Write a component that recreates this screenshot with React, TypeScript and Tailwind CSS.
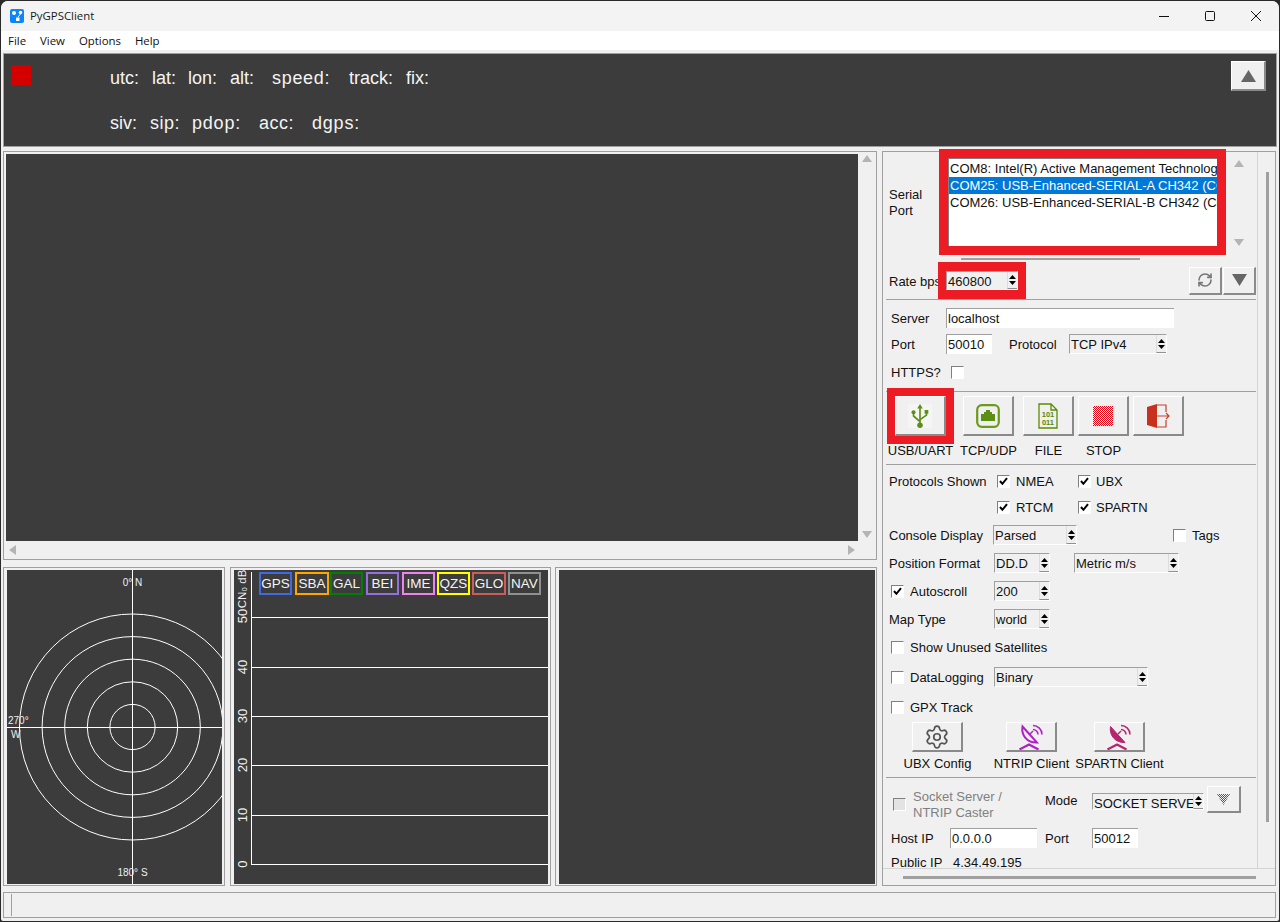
import clsx from "clsx";
import { RefreshCw, Settings } from "lucide-react";
import type { ReactNode } from "react";

const RED = "border-[#ed1c24]";

function Tri({ dir = "down", className = "" }: { dir?: "up" | "down"; className?: string }) {
  return (
    <svg width="15" height="12" viewBox="0 0 15 12" className={className}>
      <polygon points={dir === "up" ? "7.5,0 15,12 0,12" : "0,0 15,0 7.5,12"} fill="currentColor" />
    </svg>
  );
}

function Check({ checked, disabled }: { checked?: boolean; disabled?: boolean }) {
  return (
    <div
      className={clsx(
        "flex h-[13px] w-[13px] flex-none items-center justify-center border border-t-[#808080] border-r-white border-b-white border-l-[#808080]",
        disabled ? "bg-[#e3e3e3]" : "bg-white",
      )}
    >
      {checked && (
        <svg width="9" height="9" viewBox="0 0 9 9">
          <path d="M1 4 L3.4 6.8 L8 1.2" fill="none" stroke="#000" strokeWidth="2" />
        </svg>
      )}
    </div>
  );
}

function Spin({ value, className, bodyClass }: { value: string; className: string; bodyClass?: string }) {
  return (
    <div
      className={clsx(
        "flex flex-none items-stretch border border-t-[#a0a0a0] border-r-white border-b-white border-l-[#a0a0a0] bg-[#f0f0f0]",
        className,
      )}
    >
      <span className={clsx("min-w-0 flex-1 overflow-hidden pl-px leading-[19px] whitespace-nowrap", bodyClass)}>{value}</span>
      <span className="flex w-[10px] flex-none flex-col items-center justify-center gap-[2px] border-b border-l border-b-[#909090] border-l-[#dcdcdc]">
        <svg width="7" height="4" viewBox="0 0 7 4"><polygon points="3.5,0 7,4 0,4" fill="#000" /></svg>
        <svg width="7" height="4" viewBox="0 0 7 4"><polygon points="0,0 7,0 3.5,4" fill="#000" /></svg>
      </span>
    </div>
  );
}

function Input({ value, className }: { value: string; className: string }) {
  return (
    <div
      className={clsx(
        "h-[20px] flex-none border-t border-l border-[#a0a0a0] bg-white pl-px leading-[20px]",
        className,
      )}
    >
      {value}
    </div>
  );
}

function TkButton({ children, className }: { children?: ReactNode; className: string }) {
  return (
    <div
      className={clsx(
        "flex flex-none items-center justify-center border-t border-r-2 border-b-2 border-l border-t-white border-r-[#8a8a8a] border-b-[#8a8a8a] border-l-white bg-[#f0f0f0]",
        className,
      )}
    >
      {children}
    </div>
  );
}

// form row: the 2px on text spans drops labels 1px to sit level with the entry text
function Row({ className, children }: { className: string; children: ReactNode }) {
  return <div className={clsx("flex flex-none items-center [&>span]:pt-[2px]", className)}>{children}</div>;
}

function Sep({ className = "" }: { className?: string }) {
  return <div className={clsx("ml-[3px] h-px w-[370px] flex-none bg-[#a0a0a0]", className)} />;
}

function Cap({ text, className }: { text: string; className: string }) {
  return <span className={clsx("flex flex-none justify-center whitespace-nowrap", className)}>{text}</span>;
}

function UsbIcon() {
  return (
    <svg width="24" height="24" viewBox="0 0 24 26" className="bg-[#f5f5f5]">
      <g fill="none" stroke="#5c8f14" strokeWidth="1.8">
        <path d="M12 3 V23" />
        <path d="M5 10 V13 L12 19" />
        <path d="M19 9 V12 L12 17" />
      </g>
      <g fill="#5c8f14">
        <polygon points="12,0 15,5 9,5" />
        <circle cx="5" cy="9" r="2.2" />
        <rect x="17" y="6.5" width="4" height="4" />
        <circle cx="12" cy="23" r="3" />
      </g>
    </svg>
  );
}

function EthernetIcon() {
  return (
    <svg width="24" height="24" viewBox="0 0 24 24">
      <rect x="1.2" y="1.2" width="21.6" height="21.6" rx="4.5" fill="none" stroke="#6b9a1c" strokeWidth="2.2" />
      <path d="M5 17 V10 H8 V8 H10 V6 H14 V8 H16 V10 H19 V17 Z" fill="#5c8f14" />
    </svg>
  );
}

function FileIcon() {
  return (
    <svg width="20" height="26" viewBox="0 0 20 26">
      <path d="M1 1 H13 L19 7 V25 H1 Z M13 1 V7 H19" fill="none" stroke="#5c8a00" strokeWidth="1.3" />
      <text x="10" y="14" textAnchor="middle" fontSize="7.5" fontWeight="700" fontFamily="Liberation Sans, sans-serif" fill="#5c8a00">101</text>
      <text x="10" y="22" textAnchor="middle" fontSize="7.5" fontWeight="700" fontFamily="Liberation Sans, sans-serif" fill="#5c8a00">011</text>
    </svg>
  );
}

function ExitIcon() {
  return (
    <svg width="24" height="24" viewBox="0 0 24 24">
      <polygon points="1,3 11,0 11,24 1,21" fill="#c8321c" />
      <path d="M11 1 H20 V8 M20 16 V23 H11 M11 12 H23 M20 9 L23 12 L20 15" fill="none" stroke="#c8402c" strokeWidth="1.2" />
    </svg>
  );
}

function DishIcon({ color, filled }: { color: string; filled?: boolean }) {
  return (
    <svg width="26" height="26" viewBox="0 0 26 26">
      <path
        d="M4.5 2.5 C3 11 9 19 19 18.5 Z"
        fill={filled ? color : "none"}
        stroke={color}
        strokeWidth={filled ? 1 : 2}
      />
      <g fill="none" stroke={color} strokeWidth="1.5">
        <path d="M15 5.5 a5 5 0 0 1 5 5" />
        <path d="M15 1.5 a9 9 0 0 1 9 9" />
        <path d="M12 10 L15 7" />
      </g>
      <path d="M1.5 25.5 L11 20.5 L20.5 25.5" fill="none" stroke={color} strokeWidth="2.2" />
    </svg>
  );
}

function SkyView() {
  const cx = 125.5;
  const cy = 157;
  return (
    <svg width="215" height="314" className="flex-none bg-[#3c3c3c]" fontFamily="Liberation Sans, sans-serif">
      {[22.6, 45.2, 67.8, 90.4, 113].map((r) => (
        <circle key={r} cx={cx} cy={cy} r={r} fill="none" stroke="#fff" strokeWidth="1" />
      ))}
      <line x1={cx} y1="0" x2={cx} y2="314" stroke="#fff" />
      <line x1="0" y1={cy + 0.5} x2="215" y2={cy + 0.5} stroke="#fff" />
      <g fill="#f0f0f0" fontSize="10">
        <text x={cx} y="16" textAnchor="middle">0° N</text>
        <text x={cx} y="306" textAnchor="middle">180° S</text>
        <text x="1" y="154">270°</text>
        <text x="4" y="168">W</text>
      </g>
    </svg>
  );
}

const LEGEND = [
  { name: "GPS", x: 26, w: 31, color: "#4169e1" },
  { name: "SBA", x: 62, w: 32, color: "#ffa500" },
  { name: "GAL", x: 97, w: 31, color: "#008000" },
  { name: "BEI", x: 133, w: 31, color: "#9370db" },
  { name: "IME", x: 169, w: 31, color: "#ee82ee" },
  { name: "QZS", x: 204, w: 31, color: "#ffff00" },
  { name: "GLO", x: 239, w: 32, color: "#cd5c5c" },
  { name: "NAV", x: 275, w: 31, color: "#909090" },
];

function LevelsView() {
  const ticks = [
    { y: 47, label: "50", ty: 46 },
    { y: 97, label: "40", ty: 97 },
    { y: 146, label: "30", ty: 146 },
    { y: 195, label: "20", ty: 195 },
    { y: 245, label: "10", ty: 245 },
    { y: 294, label: "0", ty: 294 },
  ];
  return (
    <svg width="314" height="314" className="flex-none bg-[#3c3c3c]" fontFamily="Liberation Sans, sans-serif">
      <line x1="17.5" y1="2" x2="17.5" y2="294" stroke="#fff" />
      {ticks.map((t) => (
        <g key={t.label}>
          <line x1="17" y1={t.y + 0.5} x2="314" y2={t.y + 0.5} stroke="#fff" />
          <text
            x="8"
            y={t.ty}
            transform={`rotate(-90 8 ${t.ty})`}
            textAnchor="middle"
            dominantBaseline="central"
            fontSize="13"
            fill="#f0f0f0"
          >
            {t.label}
          </text>
        </g>
      ))}
      <text x="8" y="19" transform="rotate(-90 8 19)" textAnchor="middle" dominantBaseline="central" fontSize="11.5" fill="#f0f0f0">
        CN₀ dB
      </text>
      {LEGEND.map((l) => (
        <g key={l.name}>
          <rect x={l.x} y="3" width={l.w} height="21" fill="none" stroke={l.color} strokeWidth="2" />
          <text x={l.x + l.w / 2} y="18" textAnchor="middle" fontSize="13.5" fill="#f4f4f4">
            {l.name}
          </text>
        </g>
      ))}
    </svg>
  );
}

function SettingsPanel() {
  return (
    <div className="mt-px flex h-[735px] w-[394px] flex-none flex-col border border-[#a0a0a0] text-[13px] text-[#111]">
      <div className="flex h-[717px] flex-none border-b border-[#d4d4d4]">
        <div className="flex w-[375px] flex-none flex-col border-r border-[#d4d4d4]">
          {/* serial port */}
          <Row className="relative -mt-[3px] h-[106px] pl-[6px]">
            <span className="w-[50px] leading-[16px]">Serial<br />Port</span>
            <div className={clsx("h-[106px] w-[287px] flex-none border-[9px]", RED)}>
              <div className="h-full overflow-hidden border-t border-l border-[#808080] bg-white pt-[1px] leading-[18px] whitespace-nowrap">
                <div className="h-[17px] overflow-hidden pl-px">COM8: Intel(R) Active Management Technology - SOL (COM8)</div>
                <div className="h-[17px] overflow-hidden bg-[#0078d7] pl-px text-white">COM25: USB-Enhanced-SERIAL-A CH342 (COM25)</div>
                <div className="h-[17px] overflow-hidden pl-px">COM26: USB-Enhanced-SERIAL-B CH342 (COM26)</div>
              </div>
            </div>
            <div className="mt-[1px] ml-[8px] flex h-[86px] w-[10px] flex-none flex-col justify-between text-[#b4b4b4]">
              <svg width="10" height="7" viewBox="0 0 10 7"><polygon points="5,0 10,7 0,7" fill="currentColor" /></svg>
              <svg width="10" height="7" viewBox="0 0 10 7"><polygon points="0,0 10,0 5,7" fill="currentColor" /></svg>
            </div>
          </Row>
          <div className="mt-[3px] ml-[78px] h-[2px] w-[179px] flex-none bg-[#a0a0a0]" />
          <Row className="mt-[2px] h-[37px] pl-[6px]">
            <span className="w-[49px] whitespace-nowrap">Rate bps</span>
            <div className={clsx("relative h-[37px] w-[88px] flex-none border-x-[8px] border-y-[9px]", RED)}>
              <Spin value="460800" className="h-[19px]" bodyClass="leading-[17px]" />
            </div>
            <div className="mr-[1px] ml-auto flex gap-[1px]">
              <TkButton className="h-[28px] w-[33px] text-[#777]"><RefreshCw size={16} strokeWidth={2.4} /></TkButton>
              <TkButton className="h-[28px] w-[33px] text-[#666]"><Tri /></TkButton>
            </div>
          </Row>
          <Sep />

          {/* socket client */}
          <Row className="mt-[8px] h-[20px] pl-[8px]">
            <span className="w-[55px]">Server</span>
            <Input value="localhost" className="w-[228px]" />
          </Row>
          <Row className="mt-[6px] h-[20px] pl-[8px]">
            <span className="w-[55px]">Port</span>
            <Input value="50010" className="w-[46px]" />
            <span className="ml-[17px] w-[60px]">Protocol</span>
            <Spin value="TCP IPv4" className="h-[20px] w-[98px]" />
          </Row>
          <Row className="mt-[8px] h-[20px] pl-[8px]">
            <span className="w-[60px]">HTTPS?</span>
            <Check />
          </Row>
          <Sep className="mt-[9px]" />

          {/* connect buttons */}
          <Row className="mt-[4px] h-[40px] pl-[12px]">
            <TkButton className="relative h-[40px] w-[51px] outline-8 outline-[#ed1c24]"><UsbIcon /></TkButton>
            <TkButton className="ml-[17px] h-[40px] w-[51px]"><EthernetIcon /></TkButton>
            <TkButton className="ml-[9px] h-[40px] w-[51px]"><FileIcon /></TkButton>
            <TkButton className="ml-[4px] h-[40px] w-[51px]">
              <div className="h-[20px] w-[20px] bg-[repeating-conic-gradient(#e60012_0_25%,#ffffff_0_50%)] bg-[length:2px_2px]" />
            </TkButton>
            <TkButton className="ml-[4px] h-[40px] w-[51px]"><ExitIcon /></TkButton>
          </Row>
          <Row className="mt-[5px] h-[18px] pl-[12px]">
            <Cap text="USB/UART" className="w-[51px]" />
            <Cap text="TCP/UDP" className="ml-[17px] w-[51px]" />
            <Cap text="FILE" className="ml-[9px] w-[51px]" />
            <Cap text="STOP" className="ml-[4px] w-[51px]" />
          </Row>
          <Sep className="mt-[5px]" />

          {/* settings */}
          <Row className="mt-[8px] h-[16px] pl-[6px]">
            <span className="w-[108px] whitespace-nowrap">Protocols Shown</span>
            <Check checked />
            <span className="ml-[6px] w-[62px]">NMEA</span>
            <Check checked />
            <span className="ml-[5px]">UBX</span>
          </Row>
          <Row className="mt-[10px] h-[16px] pl-[114px]">
            <Check checked />
            <span className="ml-[6px] w-[62px]">RTCM</span>
            <Check checked />
            <span className="ml-[5px]">SPARTN</span>
          </Row>
          <Row className="mt-[10px] h-[20px] pl-[6px]">
            <span className="w-[104px] whitespace-nowrap">Console Display</span>
            <Spin value="Parsed" className="h-[20px] w-[84px]" />
            <div className="ml-[96px]"><Check /></div>
            <span className="ml-[6px]">Tags</span>
          </Row>
          <Row className="mt-[8px] h-[20px] pl-[6px]">
            <span className="w-[105px] whitespace-nowrap">Position Format</span>
            <Spin value="DD.D" className="h-[20px] w-[56px]" />
            <Spin value="Metric m/s" className="ml-[24px] h-[20px] w-[105px]" />
          </Row>
          <Row className="mt-[8px] h-[20px] pl-[8px]">
            <Check checked />
            <span className="ml-[6px] w-[84px]">Autoscroll</span>
            <Spin value="200" className="h-[20px] w-[56px]" />
          </Row>
          <Row className="mt-[8px] h-[20px] pl-[6px]">
            <span className="w-[105px]">Map Type</span>
            <Spin value="world" className="h-[20px] w-[56px]" />
          </Row>
          <Row className="mt-[8px] h-[20px] pl-[8px]">
            <Check />
            <span className="ml-[6px] whitespace-nowrap">Show Unused Satellites</span>
          </Row>
          <Row className="mt-[10px] h-[20px] pl-[8px]">
            <Check />
            <span className="ml-[6px] w-[84px]">DataLogging</span>
            <Spin value="Binary" className="h-[20px] w-[154px]" />
          </Row>
          <Row className="mt-[10px] h-[20px] pl-[8px]">
            <Check />
            <span className="ml-[6px]">GPX Track</span>
          </Row>
          <Row className="mt-[5px] h-[30px] pl-[29px]">
            <TkButton className="h-[30px] w-[51px] text-[#555]"><Settings size={26} strokeWidth={1.6} /></TkButton>
            <TkButton className="ml-[43px] h-[30px] w-[51px]"><DishIcon color="#b01ec8" /></TkButton>
            <TkButton className="ml-[37px] h-[30px] w-[51px]"><DishIcon color="#b5246f" filled /></TkButton>
          </Row>
          <Row className="mt-[3px] h-[16px] pl-[29px]">
            <Cap text="UBX Config" className="w-[51px]" />
            <Cap text="NTRIP Client" className="ml-[43px] w-[51px]" />
            <Cap text="SPARTN Client" className="ml-[37px] w-[51px]" />
          </Row>
          <Sep className="mt-[6px]" />

          {/* socket server */}
          <Row className="mt-[8px] h-[27px] pl-[10px]">
            <div className="mt-[10px]"><Check disabled /></div>
            <span className="mt-[8px] ml-[7px] w-[132px] leading-[16px] text-[#808080]">Socket Server /<br />NTRIP Caster</span>
            <span className="w-[47px]">Mode</span>
            <Spin value="SOCKET SERVER / NTRIP CASTER" className="mt-[3px] h-[17px] w-[112px]" bodyClass="leading-[15px]" />
            <TkButton className="ml-[3px] h-[27px] w-[34px]">
              <svg width="13" height="11" viewBox="0 0 13 11">
                <defs>
                  <pattern id="modedots" width="2" height="2" patternUnits="userSpaceOnUse">
                    <rect width="1" height="1" fill="#555" />
                    <rect x="1" y="1" width="1" height="1" fill="#555" />
                  </pattern>
                </defs>
                <polygon points="0,0 13,0 6.5,11" fill="url(#modedots)" />
              </svg>
            </TkButton>
          </Row>
          <Row className="mt-[15px] h-[20px] pl-[8px]">
            <span className="w-[59px]">Host IP</span>
            <Input value="0.0.0.0" className="w-[87px]" />
            <span className="ml-[8px] w-[47px]">Port</span>
            <Input value="50012" className="w-[46px]" />
          </Row>
          <Row className="mt-[4px] h-[20px] pl-[8px]">
            <span className="w-[62px] whitespace-nowrap">Public IP</span>
            <span>4.34.49.195</span>
          </Row>
        </div>
        <div className="flex-1 pt-[20px] pl-[8px]">
          <div className="h-[650px] w-[3px] bg-[#a0a0a0]" />
        </div>
      </div>
      <div className="pt-[7px] pl-[20px]">
        <div className="h-[3px] w-[353px] bg-[#a0a0a0]" />
      </div>
    </div>
  );
}

export default function App() {
  return (
    <div className="h-[922px] w-[1280px] overflow-hidden bg-[#2a2a2a] pt-px" style={{ fontFamily: '"Liberation Sans", Arial, sans-serif' }}>
      <div className="mx-px flex h-[920px] flex-col overflow-hidden rounded-t-[7px] rounded-b-[2px] bg-[#f0f0f0]">
        {/* title bar */}
        <div className="flex h-[30px] flex-none items-center bg-[#f3f3f3] pl-[9px]" style={{ fontFamily: '"Open Sans", sans-serif' }}>
          <svg width="14" height="14" viewBox="0 0 14 14" className="flex-none">
            <rect width="14" height="14" rx="2" fill="#0a84ff" />
            <circle cx="4" cy="4" r="2" fill="#fff" />
            <circle cx="10.5" cy="3.5" r="1.8" fill="#fff" />
            <rect x="6" y="8.5" width="3.5" height="3.5" fill="#fff" />
            <path d="M10.5 5 L8 8" stroke="#fff" strokeWidth="1" />
          </svg>
          <span className="ml-[6px] text-[11.4px] text-[#1a1a1a]">PyGPSClient</span>
          <div className="ml-auto flex items-center">
            <svg width="46" height="30" viewBox="0 0 46 30"><line x1="18" y1="15.5" x2="28" y2="15.5" stroke="#111" /></svg>
            <svg width="46" height="30" viewBox="0 0 46 30"><rect x="18.5" y="10.5" width="9" height="9" rx="1" fill="none" stroke="#111" /></svg>
            <svg width="46" height="30" viewBox="0 0 46 30"><path d="M18 10 L28 20 M28 10 L18 20" stroke="#111" fill="none" /></svg>
          </div>
        </div>

        {/* menu */}
        <div className="flex h-[19px] flex-none items-center gap-[14px] bg-white pl-[7px] text-[11.4px] text-[#111]" style={{ fontFamily: '"Open Sans", sans-serif' }}>
          <span>File</span>
          <span>View</span>
          <span>Options</span>
          <span>Help</span>
        </div>

        {/* status banner */}
        <div className="mx-[2px] mt-[3px] flex h-[94px] flex-none border border-[#a0a0a0] bg-[#3c3c3c] text-[18px] text-[#f4f4f4]">
          <div className="mt-[11px] ml-[7px] h-[20px] w-[20px] flex-none bg-[#d40000]" />
          <div className="ml-[79px] flex flex-col pt-[12px]">
            <div className="flex h-[24px] items-center">
              <span className="w-[42px]">utc:</span>
              <span className="w-[36px]">lat:</span>
              <span className="w-[42px]">lon:</span>
              <span className="w-[42px]">alt:</span>
              <span className="w-[77px] tracking-[0.7px]">speed:</span>
              <span className="w-[57px]">track:</span>
              <span>fix:</span>
            </div>
            <div className="mt-[21px] flex h-[24px] items-center">
              <span className="w-[40px]">siv:</span>
              <span className="w-[42px] tracking-[0.5px]">sip:</span>
              <span className="w-[67px] tracking-[0.8px]">pdop:</span>
              <span className="w-[53px] tracking-[0.5px]">acc:</span>
              <span className="tracking-[0.8px]">dgps:</span>
            </div>
          </div>
          <div className="mt-[7px] mr-[10px] ml-auto">
            <TkButton className="h-[30px] w-[35px] text-[#666]"><Tri dir="up" /></TkButton>
          </div>
        </div>

        {/* main area */}
        <div className="mx-[2px] mt-[3px] flex h-[736px] flex-none gap-[5px]">
          <div className="flex w-[874px] flex-none flex-col">
            <div className="mt-px flex h-[409px] flex-none flex-col border border-[#a0a0a0] pt-[2px] pl-[2px]">
              <div className="flex h-[387px] flex-none">
                <div className="h-[387px] w-[852px] flex-none bg-[#3c3c3c]" />
                <div className="flex w-[18px] flex-none flex-col items-center justify-between pt-[1px] pb-[3px] text-[#b4b4b4]">
                  <svg width="10" height="7" viewBox="0 0 10 7"><polygon points="5,0 10,7 0,7" fill="currentColor" /></svg>
                  <svg width="10" height="7" viewBox="0 0 10 7"><polygon points="0,0 10,0 5,7" fill="currentColor" /></svg>
                </div>
              </div>
              <div className="flex h-[18px] w-[852px] items-center justify-between px-[3px] text-[#b4b4b4]">
                <svg width="7" height="10" viewBox="0 0 7 10"><polygon points="0,5 7,0 7,10" fill="currentColor" /></svg>
                <svg width="7" height="10" viewBox="0 0 7 10"><polygon points="0,0 7,5 0,10" fill="currentColor" /></svg>
              </div>
            </div>
            <div className="mt-[7px] flex h-[319px] flex-none">
              <div className="h-[319px] w-[222px] flex-none border border-[#a0a0a0] pt-[2px] pl-[3px]">
                <SkyView />
              </div>
              <div className="ml-[5px] h-[319px] w-[321px] flex-none border border-[#a0a0a0] pt-[2px] pl-[3px]">
                <LevelsView />
              </div>
              <div className="ml-[4px] h-[319px] w-[322px] flex-none border border-[#a0a0a0] pt-[2px] pl-[3px]">
                <div className="h-[314px] w-[316px] bg-[#3c3c3c]" />
              </div>
            </div>
          </div>
          <SettingsPanel />
        </div>

        {/* status bar */}
        <div className="mt-[6px] ml-[2px] h-[26px] w-[1273px] flex-none border border-[#a0a0a0] pt-px pl-[7px]">
          <div className="h-[22px] w-px bg-[#a0a0a0]" />
        </div>
      </div>
    </div>
  );
}
